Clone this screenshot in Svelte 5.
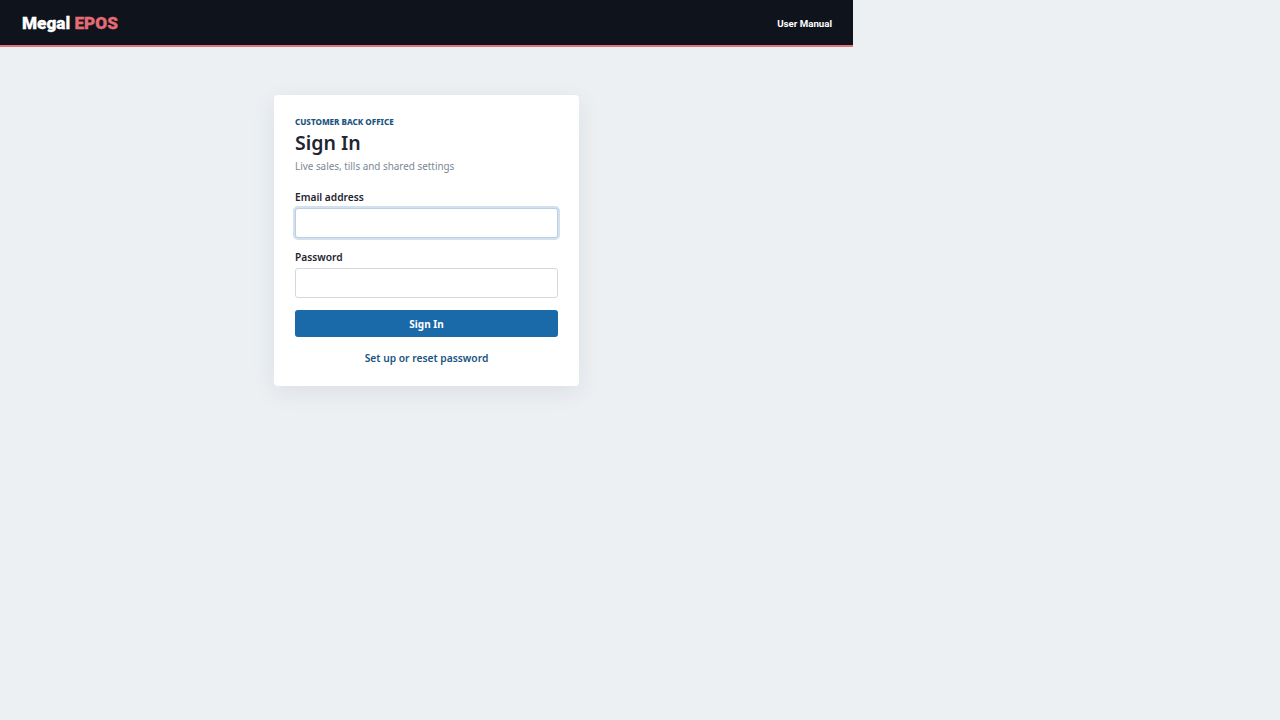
<script>
	let email = $state('');
	let password = $state('');
</script>

<div class="shell">
	<header class="topbar">
		<a class="brand" href="#home">Megal <span>EPOS</span></a>
		<a class="manual" href="#manual">User Manual</a>
	</header>

	<main class="content">
		<form class="card" onsubmit={(e) => e.preventDefault()}>
			<p class="eyebrow">CUSTOMER BACK OFFICE</p>
			<h1>Sign In</h1>
			<p class="sub">Live sales, tills and shared settings</p>

			<div class="field">
				<label for="email">Email address</label>
				<input id="email" class="focused" type="email" bind:value={email} />
			</div>

			<div class="field">
				<label for="password">Password</label>
				<input id="password" type="password" bind:value={password} />
			</div>

			<button type="submit">Sign In</button>
			<a class="reset" href="#reset">Set up or reset password</a>
		</form>
	</main>
</div>

<style>
	:global(body) {
		background: #ecf0f3;
		font-family: 'Noto Sans', 'Open Sans', sans-serif;
		color: #1f2530;
	}

	.shell {
		width: 853px;
		min-height: 100vh;
	}

	.topbar {
		height: 44px;
		padding: 1px 21px 0 22px;
		border-bottom: 2px solid #e0737c;
		background: #0f141c;
		display: flex;
		align-items: center;
		justify-content: space-between;
	}

	.brand {
		font-family: Roboto, sans-serif;
		font-size: 17.2px;
		font-weight: 900;
		-webkit-text-stroke: 0.3px currentColor;
		color: #fff;
		text-decoration: none;
	}

	.brand span {
		color: #e56b75;
	}

	.manual {
		font-family: Roboto, sans-serif;
		font-size: 9.7px;
		font-weight: 700;
		color: #fff;
		text-decoration: none;
	}

	.content {
		display: flex;
		justify-content: center;
		padding-top: 48px;
	}

	.card {
		width: 305px;
		box-sizing: border-box;
		background: #fff;
		border-radius: 4px;
		padding: 21px 21px 20px;
		display: flex;
		flex-direction: column;
		box-shadow: 0 6px 24px rgba(20, 40, 70, 0.08);
	}

	.eyebrow {
		margin: 0;
		font-size: 8.1px;
		line-height: 12px;
		font-weight: 800;
		color: #1a5480;
	}

	h1 {
		margin: 1px 0 0;
		font-size: 19.5px;
		line-height: 28px;
		font-weight: 600;
		color: #1f2530;
	}

	.sub {
		margin: 1px 0 15px;
		font-size: 9.9px;
		line-height: 16px;
		color: #7a8794;
	}

	.field {
		display: flex;
		flex-direction: column;
		margin-bottom: 11px;
	}

	label {
		font-size: 10.2px;
		line-height: 16px;
		font-weight: 600;
		margin-bottom: 3px;
	}

	input {
		height: 30px;
		box-sizing: border-box;
		border: 1px solid #d5d9de;
		border-radius: 3px;
		background: #fff;
		outline: none;
	}

	input.focused {
		border-color: #bccfe0;
		box-shadow: 0 0 0 2px #d3e1ee;
	}

	button {
		margin-top: 1px;
		height: 27px;
		border: 0;
		border-radius: 3px;
		background: #1a69a9;
		color: #fff;
		font: inherit;
		font-size: 10px;
		font-weight: 700;
	}

	.reset {
		margin-top: 13px;
		text-align: center;
		font-size: 10.25px;
		line-height: 16px;
		font-weight: 600;
		color: #1a5480;
		text-decoration: none;
	}
</style>
